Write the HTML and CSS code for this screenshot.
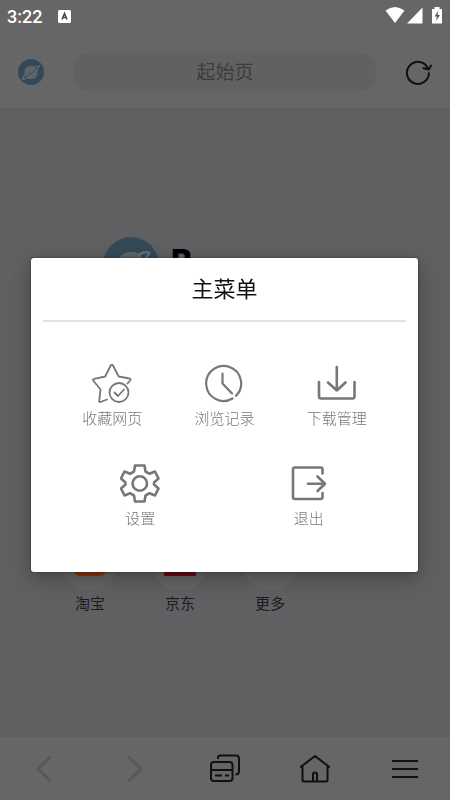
FILE: index.html
```html
<!DOCTYPE html>
<html lang="zh-CN">
<head>
<meta charset="utf-8">
<meta name="viewport" content="width=device-width, initial-scale=1">
<title>主菜单</title>
<link rel="stylesheet" href="styles.css">
</head>
<body>
<svg class="defs" aria-hidden="true">
  <symbol id="planet" viewBox="0 0 26 26">
    <circle cx="13" cy="13" r="13" fill="#344957"/>
    <circle cx="13" cy="13.500" r="6.700" fill="#5b646a"/>
    <path d="M5 20.500C9 20 18 13 21.500 7.500C20 6.500 17.500 7.500 16.500 8.500M5 20.500C4 19 6 17 7.500 16" fill="none" stroke="#666f75" stroke-width="1.200"/>
    <path d="M7 18C12 16 17 12 20 8" fill="none" stroke="#344957" stroke-width="1"/>
  </symbol>
</svg>
<div class="app">
  <div class="status">
    <span class="time">3:22</span>
    <svg class="badge" width="13" height="13" viewBox="0 0 13 13"><rect width="13" height="13" rx="1.500" fill="#fff"/><path d="M4 9.500 6.500 3.500 9 9.500M4.800 7.500H8.200" fill="none" stroke="#444" stroke-width="1.500"/></svg>
    <svg class="signals" width="58" height="18" viewBox="0 0 58 18" fill="#fff"><path d="M.5 4.500Q10 -2.500 19.500 4.500L10 17ZM37.500 1.500V17.500H22ZM47 3H49.500V1H54.500V3H57V17.500H47Z"/><path d="M53.500 4.500 49.500 10.500H52L51 15 55 9H52.500Z" fill="#555"/></svg>
  </div>
  <header class="topbar">
    <button class="plain" aria-label="浏览器"><svg width="26" height="26"><use href="#planet"/></svg></button>
    <input class="address" type="text" placeholder="起始页" aria-label="地址">
    <button class="plain" aria-label="刷新"><svg width="26" height="26" viewBox="0 0 26 26" fill="none" stroke="#111" stroke-width="2" stroke-linecap="round" stroke-linejoin="round"><path d="M22.900 14.200A11 11 0 1 1 22 9.500M17.500 9.200 22.700 10.500 25 6.500"/></svg></button>
  </header>
  <main class="home">
    <div class="brand"><svg class="brand-logo" viewBox="0 0 26 26"><use href="#planet"/></svg><span class="brand-name">Browserone</span></div>
    <nav class="shortcuts">
      <a href="#"><span class="disc"><i class="tile orange"></i></span>淘宝</a>
      <a href="#"><span class="disc"><i class="tile red"></i></span>京东</a>
      <a href="#"><span class="disc"></span>更多</a>
    </nav>
  </main>
  <footer class="toolbar">
    <button class="plain" aria-label="后退"><svg width="30" height="30" viewBox="0 0 30 30" class="dim"><path d="M20 3.500 8 15 20 26.500"/></svg></button>
    <button class="plain" aria-label="前进"><svg width="30" height="30" viewBox="0 0 30 30" class="dim"><path d="M9 3.500 21 15 9 26.500"/></svg></button>
    <button class="plain" aria-label="窗口"><svg width="30" height="30" viewBox="0 0 30 30" class="dark"><rect x="1" y="8" width="21.500" height="19" rx="3"/><path d="M1 16H22.500M5 21.500H12M15 21.500H19M8 5V3.500Q8 1.500 10 1.500H26Q29 1.500 29 4.500V17Q29 20.500 25.500 20.500"/></svg></button>
    <button class="plain" aria-label="主页"><svg width="30" height="30" viewBox="0 0 30 30" class="dark"><path d="M0 13.500 15 2 30 13.500M2.500 12V26Q2.500 27.500 4 27.500H26Q27.500 27.500 27.500 26V12M13 27.500V20.500Q13 18.500 15 18.500T17 20.500V27.500"/></svg></button>
    <button class="plain" aria-label="菜单"><svg width="30" height="30" viewBox="0 0 30 30" class="dark"><path d="M2 7H28M2 15H28M2 23H28"/></svg></button>
  </footer>
</div>
<div class="overlay">
  <section class="dialog" role="dialog" aria-labelledby="menu-title">
    <h1 id="menu-title">主菜单</h1>
    <div class="row">
      <button><svg viewBox="0 0 40 40" class="thin"><path d="M15 35.500 8.500 38Q7 38.500 7.200 36.800L8.500 25.500 1.200 16.500Q.5 15.200 2.200 14.800L13.200 12.500 18.700 1.500Q20 .2 21 1.500L26.700 12.500 37.500 14.500Q39.300 15 38.200 16.500L35.500 19.500"/><circle cx="27" cy="28.500" r="9.500"/><path d="M22.500 28.500 26 32 32 25.500"/></svg>收藏网页</button>
      <button><svg viewBox="0 0 40 40"><path d="M28.500 34.500A17.500 17.500 0 1 1 32 31.800M18.500 9.500V19.500L28 29.500"/></svg>浏览记录</button>
      <button><svg viewBox="0 0 40 40" class="bold"><path d="M2 18V32.500Q2 34.500 4 34.500H35.500Q37.500 34.500 37.500 32.500V18M19.800 3V26.500M11 18.500 19.800 26.500 28.500 18.500"/></svg>下载管理</button>
    </div>
    <div class="row">
      <button><svg viewBox="0 0 40 40" class="bold"><path d="M15 1.500H24.500L25.500 7.500L29.500 9.800L35 7.500L38.500 14.500L34 18.500V20.500L38.500 24.500L35 31.500L29.500 29.200L25.500 31.500L24.500 37.500H15L14 31.500L10 29.200L4.500 31.500L1 24.500L5.500 20.500V18.500L1 14.500L4.500 7.500L10 9.800L14 7.500Z"/><circle cx="19.800" cy="19.500" r="7.200"/></svg>设置</button>
      <button><svg viewBox="0 0 40 40" class="bold"><path d="M33.500 9.500V5.500Q33.500 3.500 31.500 3.500H6Q4 3.500 4 5.500V33Q4 35 6 35H31.500Q33.500 35 33.500 33V29M19 19.800H36M28.500 12.500 36 19.800 28.500 27"/></svg>退出</button>
    </div>
  </section>
</div>
</body>
</html>
```
FILE: styles.css
```css
* { box-sizing: border-box; }
html, body { height: 100%; }
body {
  margin: 0;
  overflow: hidden;
  background: #606062;
  font-family: Roboto, "Noto Sans CJK SC", sans-serif;
}
button, input { font: inherit; }
svg { display: block; }
.defs { position: absolute; width: 0; height: 0; }
.app { display: flex; flex-direction: column; min-height: 100%; }
.status {
  display: flex;
  align-items: center;
  height: 32px;
  padding: 0 7px;
  background: #666;
  color: #fff;
}
.time { font-size: 18px; font-weight: 500; }
.badge { margin-left: 16px; }
.signals { margin-left: auto; margin-bottom: 2px; }
.topbar {
  display: flex;
  align-items: center;
  gap: 30px;
  height: 76px;
  padding: 4px 18px 0;
  background: #666;
}
.plain {
  display: flex;
  align-items: center;
  justify-content: center;
  padding: 0;
  border: 0;
  background: none;
}
.address {
  flex: 1;
  min-width: 0;
  height: 38px;
  padding: 0;
  border: 0;
  border-radius: 14px;
  background: #616161;
  text-align: center;
  font-size: 19px;
}
.address::placeholder { color: #3c3c3c; opacity: 1; }
.home { flex: 1; padding: 129px 45px 0; }
.brand {
  display: flex;
  align-items: center;
  gap: 12px;
  height: 56px;
  margin-left: 58px;
  color: #000;
}
.brand-logo { width: 56px; height: 56px; }
.brand-name {
  margin-bottom: 4px;
  font: 800 27px/40px Inter, sans-serif;
}
.brand-name::first-letter { font-size: 32px; }
.shortcuts {
  display: grid;
  grid-template-columns: repeat(4, 1fr);
  padding-top: 242px;
}
.shortcuts a {
  display: flex;
  flex-direction: column;
  align-items: center;
  color: #1c1c1c;
  font-size: 15px;
  line-height: 26px;
  text-decoration: none;
}
.disc {
  display: grid;
  place-items: center;
  width: 56px;
  height: 56px;
  border-radius: 50%;
  background: #656565;
}
.tile { width: 32px; height: 26px; }
.orange { border-radius: 6px; background: #86350f; }
.red { background: #700812; }
.toolbar {
  display: grid;
  grid-template-columns: repeat(5, 1fr);
  height: 63px;
  background: #666;
}
.dark, .dim { fill: none; stroke: #111; stroke-width: 2; stroke-linejoin: round; }
.dim { stroke: #585858; stroke-width: 3; stroke-linecap: round; }
.overlay {
  position: fixed;
  inset: 0;
  display: grid;
  align-items: center;
  padding: 30px 32px 0 31px;
}
.dialog {
  padding: 0 12px 42px;
  border-radius: 3px;
  background: #fff;
  box-shadow: 0 6px 20px rgba(0, 0, 0, 0.3), 0 0 3px rgba(0, 0, 0, 0.4);
}
.dialog h1 {
  margin: 0 0 32px;
  padding-top: 2px;
  border-bottom: 2px solid #e2e2e2;
  color: #111;
  font-size: 22px;
  font-weight: 400;
  line-height: 60px;
  text-align: center;
}
.row { display: flex; padding: 0 13px; }
.row + .row { margin-top: 24px; }
.row button {
  flex: 1;
  display: flex;
  flex-direction: column;
  align-items: center;
  padding: 10px 0 0;
  border: 0;
  background: none;
  color: #777;
  font-size: 15px;
  font-weight: 300;
  line-height: 22px;
}
.row svg {
  width: 40px;
  height: 40px;
  margin-bottom: 4px;
  fill: none;
  stroke: #777;
  stroke-width: 2.2;
  stroke-linecap: round;
  stroke-linejoin: round;
}
.row .thin { stroke-width: 1.8; }
.row .bold { stroke-width: 2.6; }
```
